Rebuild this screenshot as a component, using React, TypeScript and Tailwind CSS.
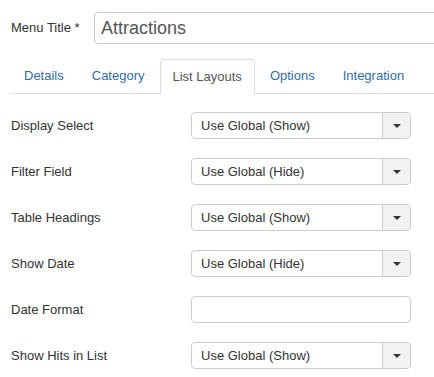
import React from "react";

const rows: { label: string; value: string | null }[] = [
  { label: "Display Select", value: "Use Global (Show)" },
  { label: "Filter Field", value: "Use Global (Hide)" },
  { label: "Table Headings", value: "Use Global (Show)" },
  { label: "Show Date", value: "Use Global (Hide)" },
  { label: "Date Format", value: null },
  { label: "Show Hits in List", value: "Use Global (Show)" },
];

const tabs = ["Details", "Category", "List Layouts", "Options", "Integration"];

function Select({ value }: { value: string }) {
  return (
    <div className="flex h-[27px] w-[220px] shrink-0 items-stretch rounded-[4px] border border-[#cccccc] bg-white">
      <div className="flex flex-1 items-center whitespace-nowrap pl-[9px] text-[13px] text-[#333333]">{value}</div>
      <div className="flex w-[28px] items-center justify-center rounded-r-[4px] border-l border-[#cccccc] bg-[#f2f2f2]">
        <span className="block h-0 w-0 border-x-[4px] border-t-[4px] border-x-transparent border-t-[#333333]" />
      </div>
    </div>
  );
}

export default function App() {
  return (
    <div
      className="relative h-[377px] w-[434px] overflow-hidden bg-white"
      style={{ fontFamily: '"Liberation Sans", Arial, sans-serif' }}
    >
      <div className="flex w-[700px] items-center pt-[12px]">
        <div className="w-[94px] shrink-0 whitespace-nowrap pl-[11px] text-[13px] text-[#333333]">Menu Title *</div>
        <div className="flex h-[32px] w-[500px] shrink-0 items-center rounded-[4px] border border-[#cccccc] pl-[6px] text-[18px] text-[#555555]">
          Attractions
        </div>
      </div>

      <div className="ml-[10px] mt-[15px] flex w-[600px] border-b border-[#dddddd] pl-[1px]">
        {tabs.map((t) => {
          const active = t === "List Layouts";
          return (
            <div
              key={t}
              className={
                active
                  ? "-mb-px mr-[2px] flex h-[35px] shrink-0 items-center whitespace-nowrap rounded-t-[4px] border border-b-0 border-[#dddddd] bg-white px-[12px] text-[13px] text-[#555555]"
                  : "mr-[2px] flex h-[34px] shrink-0 items-center whitespace-nowrap border border-transparent px-[12px] text-[13px] text-[#2f6ea8]"
              }
            >
              {t}
            </div>
          );
        })}
      </div>

      <div className="flex flex-col gap-[19px] pt-[18px]">
        {rows.map((r) => (
          <div key={r.label} className="flex h-[27px] items-center">
            <div className="w-[191px] shrink-0 whitespace-nowrap pl-[11px] text-[13px] text-[#333333]">{r.label}</div>
            {r.value ? (
              <Select value={r.value} />
            ) : (
              <div className="h-[27px] w-[220px] shrink-0 rounded-[4px] border border-[#cccccc] bg-white" />
            )}
          </div>
        ))}
      </div>
    </div>
  );
}
